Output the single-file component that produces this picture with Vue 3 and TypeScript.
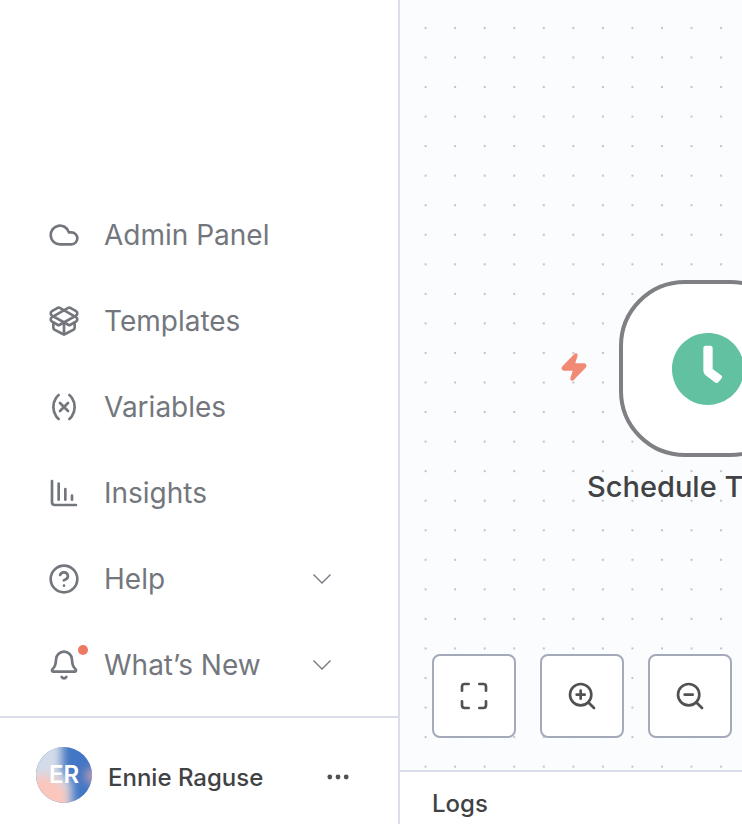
<script setup lang="ts">
interface MenuItem {
  label: string
  paths: string[]
  expandable?: boolean
  unread?: boolean
}

interface CanvasControl {
  label: string
  paths: string[]
}

const menu: MenuItem[] = [
  { label: 'Admin Panel', paths: ['M17.5 19H9a7 7 0 1 1 6.71-9h1.79a4.5 4.5 0 1 1 0 9Z'] },
  {
    label: 'Templates',
    paths: [
      'M12 22v-9',
      'M15.17 2.21a1.67 1.67 0 0 1 1.63 0L21 4.57a1.93 1.93 0 0 1 0 3.36L8.82 14.79a1.655 1.655 0 0 1-1.64 0L3 12.43a1.93 1.93 0 0 1 0-3.36z',
      'M20 13v3.87a2.06 2.06 0 0 1-1.11 1.83l-6 3.08a1.93 1.93 0 0 1-1.78 0l-6-3.08A2.06 2.06 0 0 1 4 16.87V13',
      'M21 12.43a1.93 1.93 0 0 0 0-3.36L8.83 2.2a1.64 1.64 0 0 0-1.63 0L3 4.57a1.93 1.93 0 0 0 0 3.36l12.18 6.86a1.636 1.636 0 0 0 1.63 0z',
    ],
  },
  {
    label: 'Variables',
    paths: ['M8 21s-4-3-4-9 4-9 4-9', 'M16 3s4 3 4 9-4 9-4 9', 'M15 9l-6 6', 'M9 9l6 6'],
  },
  { label: 'Insights', paths: ['M3 3v16a2 2 0 0 0 2 2h16', 'M8 17V5', 'M13 17V9', 'M18 17v-3'] },
  {
    label: 'Help',
    expandable: true,
    paths: [
      'M12 2a10 10 0 1 0 0 20a10 10 0 1 0 0-20z',
      'M9.09 9a3 3 0 0 1 5.83 1c0 2-3 3-3 3',
      'M12 17h.01',
    ],
  },
  {
    label: 'What’s New',
    expandable: true,
    unread: true,
    paths: [
      'M10.268 21a2 2 0 0 0 3.464 0',
      'M3.262 15.326A1 1 0 0 0 4 17h16a1 1 0 0 0 .74-1.673C19.41 13.956 18 12.499 18 8A6 6 0 0 0 6 8c0 4.499-1.411 5.956-2.738 7.326',
    ],
  },
]

const lens = 'M11 3a8 8 0 1 0 0 16a8 8 0 1 0 0-16z'
const controls: CanvasControl[] = [
  {
    label: 'Fit to view',
    paths: [
      'M8 3H5a2 2 0 0 0-2 2v3',
      'M21 8V5a2 2 0 0 0-2-2h-3',
      'M3 16v3a2 2 0 0 0 2 2h3',
      'M16 21h3a2 2 0 0 0 2-2v-3',
    ],
  },
  { label: 'Zoom in', paths: [lens, 'M21 21l-4.35-4.35', 'M11 8v6', 'M8 11h6'] },
  { label: 'Zoom out', paths: [lens, 'M21 21l-4.35-4.35', 'M8 11h6'] },
]
</script>

<template>
  <div class="shell">
    <aside class="sidebar">
      <nav class="menu">
        <a v-for="item in menu" :key="item.label" class="menu-item" href="#">
          <span class="menu-icon">
            <svg class="icon" viewBox="0 0 24 24" aria-hidden="true">
              <path v-for="d in item.paths" :key="d" :d="d" />
            </svg>
            <span v-if="item.unread" class="unread"></span>
          </span>
          <span class="menu-label">{{ item.label }}</span>
          <svg v-if="item.expandable" class="chevron" viewBox="0 0 20 12" aria-hidden="true">
            <path d="M1.5 1.5L10 10L18.5 1.5" />
          </svg>
        </a>
      </nav>
      <footer class="user">
        <span class="avatar">
          <svg class="avatar-art" viewBox="0 0 56 56" aria-hidden="true">
            <defs>
              <clipPath id="avatar-clip"><circle cx="28" cy="28" r="28" /></clipPath>
              <filter
                id="avatar-blur"
                x="-60"
                y="-60"
                width="180"
                height="180"
                filterUnits="userSpaceOnUse"
                color-interpolation-filters="sRGB"
              >
                <feGaussianBlur stdDeviation="5" />
              </filter>
            </defs>
            <g clip-path="url(#avatar-clip)">
              <rect width="56" height="56" fill="#4376c4" />
              <g filter="url(#avatar-blur)">
                <path d="M-40-40H26V24L36 36V90H-40z" fill="#d4dbe8" />
                <path d="M-40 36L12 28L30 40L36 90H-40z" fill="#fbc6bc" />
                <circle cx="57" cy="29" r="8" fill="#c09fb4" />
              </g>
            </g>
          </svg>
          <span class="initials">ER</span>
        </span>
        <span class="user-name">Ennie Raguse</span>
        <button class="more" type="button" aria-label="User menu">
          <svg viewBox="0 0 24 8" aria-hidden="true">
            <circle cx="3.8" cy="4" r="2.4" />
            <circle cx="12" cy="4" r="2.4" />
            <circle cx="20.2" cy="4" r="2.4" />
          </svg>
        </button>
      </footer>
    </aside>

    <main class="workspace">
      <section class="canvas">
        <svg class="grid" aria-hidden="true">
          <defs>
            <pattern id="dots" x="10.8" y="13.1" width="29.55" height="29.55" patternUnits="userSpaceOnUse">
              <circle cx="14.8" cy="14.8" r="1.1" />
            </pattern>
          </defs>
          <rect width="100%" height="100%" fill="url(#dots)" />
        </svg>

        <svg class="bolt" viewBox="0 0 24 24" aria-hidden="true">
          <path
            d="M4 14a1 1 0 0 1-.78-1.63l9.9-10.2a.5.5 0 0 1 .86.46l-1.92 6.02A1 1 0 0 0 13 10h7a1 1 0 0 1 .78 1.63l-9.9 10.2a.5.5 0 0 1-.86-.46l1.92-6.02A1 1 0 0 0 11 14z"
          />
        </svg>
        <div class="node">
          <svg class="clock" viewBox="8 8 496 496" aria-hidden="true">
            <path
              d="M256 8C119 8 8 119 8 256S119 504 256 504 504 393 504 256 393 8 256 8Zm92.49 313l-20 25a16 16 0 0 1-22.49 2.5l-67-49.72a40 40 0 0 1-15-31.23V112a16 16 0 0 1 16-16h32a16 16 0 0 1 16 16V256l58 42.5A16 16 0 0 1 348.49 321Z"
            />
          </svg>
        </div>
        <div class="node-label">Schedule Trigger</div>

        <div class="controls">
          <button v-for="c in controls" :key="c.label" class="control" type="button" :aria-label="c.label">
            <svg class="icon" viewBox="0 0 24 24" aria-hidden="true">
              <path v-for="d in c.paths" :key="d" :d="d" />
            </svg>
          </button>
        </div>
      </section>
      <section class="logs">Logs</section>
    </main>
  </div>
</template>

<style>
body {
  margin: 0;
}
</style>

<style scoped>
.shell {
  display: flex;
  height: 100vh;
  overflow: hidden;
  background: #fff;
  color: #414244;
  font-family: Inter, 'Liberation Sans', sans-serif;
}

.shell * {
  box-sizing: border-box;
}

.sidebar {
  display: flex;
  flex: 0 0 400px;
  flex-direction: column;
  border-right: 2px solid #d9dee8;
}

.menu {
  display: flex;
  flex: 1;
  flex-direction: column;
  justify-content: flex-end;
  padding: 0 64px 8px 48px;
}

.menu-item {
  display: flex;
  align-items: center;
  height: 86px;
  gap: 24px;
  color: #73777d;
  font-size: 28px;
  line-height: 36px;
  text-decoration: none;
}

.menu-icon {
  position: relative;
  display: flex;
}

.icon {
  width: 32px;
  height: 32px;
  fill: none;
  stroke: currentColor;
  stroke-width: 2;
  stroke-linecap: round;
  stroke-linejoin: round;
}

.unread {
  position: absolute;
  top: -4px;
  right: -8px;
  width: 10px;
  height: 10px;
  border-radius: 50%;
  background: #ee7963;
}

.menu-label {
  flex: 1;
}

.chevron {
  width: 20px;
  height: 12px;
  margin-right: 2px;
  fill: none;
  stroke: currentColor;
  stroke-width: 1.3;
}

.user {
  display: flex;
  align-items: center;
  height: 108px;
  padding: 8px 44px 0 36px;
  border-top: 2px solid #d9dee8;
  gap: 16px;
}

.avatar {
  display: grid;
  width: 56px;
  height: 56px;
  place-items: center;
}

.avatar-art,
.initials {
  grid-area: 1 / 1;
}

.avatar-art {
  width: 56px;
  height: 56px;
}

.initials {
  z-index: 1;
  color: #fff;
  font-size: 24px;
  font-weight: 600;
  line-height: 28px;
}

.user-name {
  flex: 1;
  padding-top: 6px;
  font-size: 24px;
  font-weight: 500;
  line-height: 32px;
}

.more {
  display: flex;
  padding: 4px 4px 0;
  border: 0;
  background: none;
}

.more svg {
  width: 24px;
  height: 8px;
  fill: #505153;
}

.workspace {
  display: flex;
  flex: 1;
  min-width: 0;
  flex-direction: column;
}

.canvas {
  position: relative;
  display: flex;
  flex: 1;
  align-items: flex-end;
  overflow: hidden;
  background: #fbfcfe;
}

.grid {
  position: absolute;
  inset: 0;
  width: 100%;
  height: 100%;
  fill: #b9babd;
}

.bolt {
  position: absolute;
  top: 352px;
  left: 159px;
  width: 30px;
  height: 30px;
  fill: #f18a75;
  stroke: #f18a75;
  stroke-width: 2;
  stroke-linejoin: round;
}

.node {
  position: absolute;
  top: 280px;
  left: 219px;
  display: grid;
  width: 177px;
  height: 177px;
  place-items: center;
  border: 4px solid #7f8084;
  border-radius: 66px;
  background: #fff;
}

.clock {
  width: 72px;
  height: 72px;
  fill: #62c1a1;
}

.node-label {
  position: absolute;
  top: 469px;
  left: 187px;
  font-size: 29px;
  font-weight: 500;
  line-height: 36px;
  white-space: nowrap;
}

.controls {
  position: relative;
  display: flex;
  padding: 0 32px 32px;
  gap: 24px;
}

.control {
  display: grid;
  width: 84px;
  height: 84px;
  padding: 0;
  place-items: center;
  border: 2px solid #a5aabb;
  border-radius: 8px;
  background: #fff;
  color: #505153;
}

.logs {
  height: 54px;
  padding: 16px 32px 0;
  border-top: 2px solid #d9dee8;
  background: #fff;
  font-size: 24px;
  font-weight: 500;
  line-height: 32px;
}
</style>
